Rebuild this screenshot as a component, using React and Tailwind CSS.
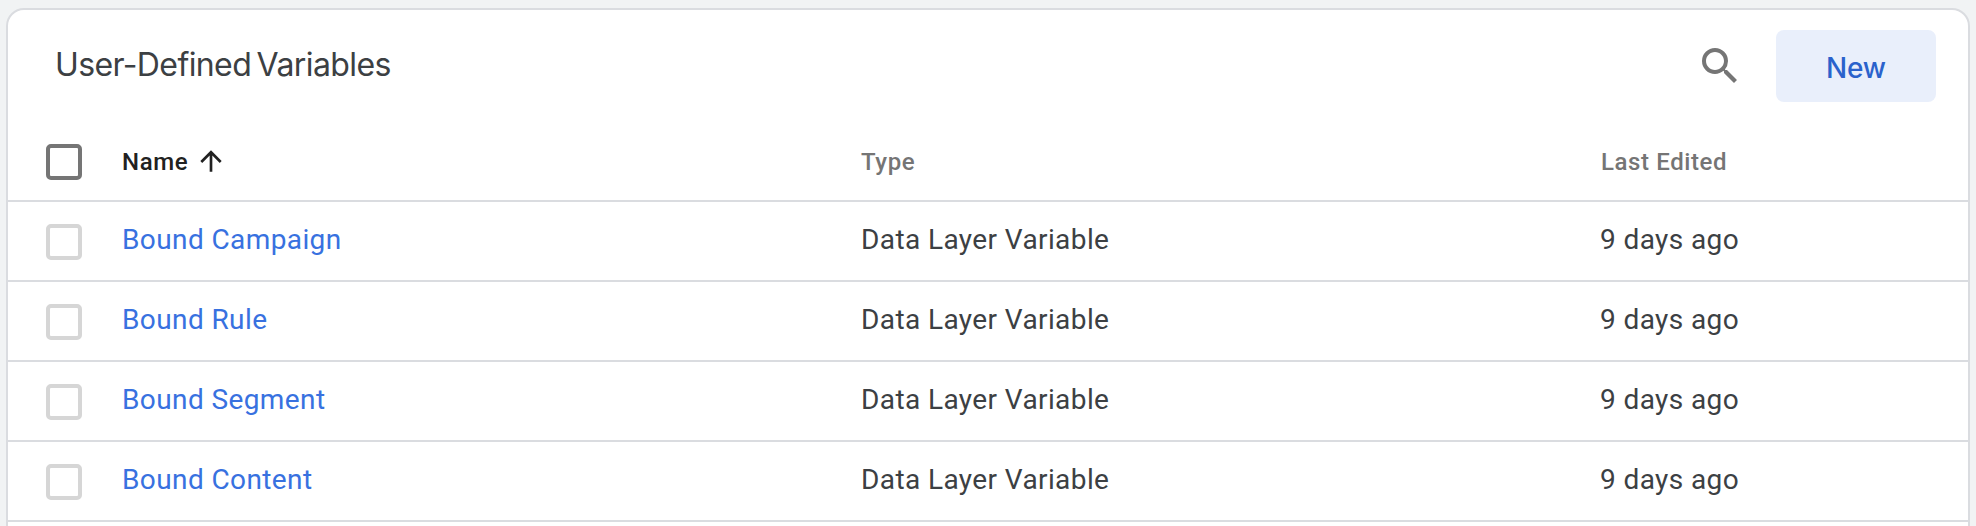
import React from "react";

const variables = [
  { name: "Bound Campaign", type: "Data Layer Variable", edited: "9 days ago" },
  { name: "Bound Rule", type: "Data Layer Variable", edited: "9 days ago" },
  { name: "Bound Segment", type: "Data Layer Variable", edited: "9 days ago" },
  { name: "Bound Content", type: "Data Layer Variable", edited: "9 days ago" },
];

function SearchIcon() {
  return (
    <svg viewBox="0 0 24 24" className="h-12 w-12 fill-[#757575]">
      <path d="M15.5 14h-.79l-.28-.27A6.471 6.471 0 0 0 16 9.5 6.5 6.5 0 1 0 9.5 16c1.61 0 3.09-.59 4.23-1.57l.27.28v.79l5 4.99L20.49 19l-4.99-5zm-6 0C7.01 14 5 11.99 5 9.5S7.01 5 9.5 5 14 7.01 14 9.5 11.99 14 9.5 14z" />
    </svg>
  );
}

function ArrowUpIcon() {
  return (
    <svg viewBox="0 0 24 24" className="-mt-0.5 ml-[7px] h-8 w-8 fill-[#212121]">
      <path d="M4 12l1.41 1.41L11 7.83V20h2V7.83l5.58 5.59L20 12l-8-8-8 8z" />
    </svg>
  );
}

function Checkbox({ header }) {
  return (
    <button
      role="checkbox"
      aria-checked="false"
      className={`block h-9 w-9 rounded-[5px] border-4 ${header ? "border-[#757575]" : "border-[#d6d6d6]"}`}
    />
  );
}

export default function App() {
  return (
    <div className="h-[526px] overflow-hidden bg-[#f1f3f4] pt-2 pr-1.5 pl-1.5 font-[Roboto,sans-serif]">
      <div className="h-[600px] rounded-t-[18px] border-2 border-[#dadce0] bg-white">
        {/* Card header */}
        <div className="flex h-28 items-start justify-between pt-5 pr-8 pl-[47px]">
          <h2 className="pt-3 font-[Inter,sans-serif] text-[32px] leading-[46px] tracking-[-0.6px] text-[#3c4043] [word-spacing:-3px]">
            User-Defined Variables
          </h2>
          <div className="flex gap-8">
            <button aria-label="Search" className="mt-3 h-12 w-12">
              <SearchIcon />
            </button>
            <button className="h-[72px] w-40 rounded-lg bg-[#e9effb] pt-1 font-[Inter,sans-serif] text-[28px] font-medium tracking-[-0.2px] text-[#2a62cc]">
              New
            </button>
          </div>
        </div>

        {/* Column titles */}
        <div className="grid h-20 grid-cols-[114px_739px_739px_1fr] items-center border-b-2 border-[#dadce0] pt-0.5 text-2xl font-medium tracking-[0.6px] text-[#757575]">
          <div className="pl-[38px]">
            <Checkbox header />
          </div>
          <div className="flex items-center text-[#212121]">
            Name
            <ArrowUpIcon />
          </div>
          <div>Type</div>
          <div className="pl-px">Last Edited</div>
        </div>

        {variables.map((v) => (
          <div
            key={v.name}
            className="grid h-20 grid-cols-[114px_739px_739px_1fr] items-center border-b-2 border-[#dadce0] text-[28px] leading-10 tracking-[0.4px] text-[#3c4043]"
          >
            <div className="pt-0.5 pl-[38px]">
              <Checkbox />
            </div>
            <a href="#" className="pb-0.5 text-[#3871e0]">{v.name}</a>
            <div className="pb-0.5">{v.type}</div>
            <div className="pb-0.5">{v.edited}</div>
          </div>
        ))}
      </div>
    </div>
  );
}
